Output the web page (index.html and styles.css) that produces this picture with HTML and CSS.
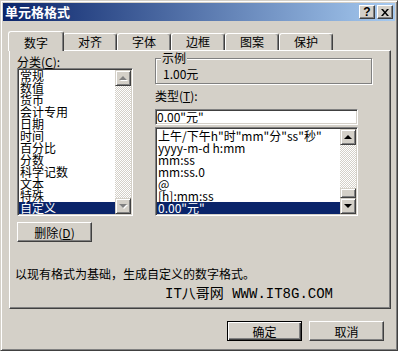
FILE: index.html
```html
<!DOCTYPE html>
<html>
<head>
    <title>单元格格式</title>
    <link rel="stylesheet" href="styles.css">
</head>
<body>
    <div class="window">
        <div class="titlebar">
            <span class="title">单元格格式</span>
            <div class="title-buttons">
                <span class="title-btn help">?</span>
                <span class="title-btn">
                    <svg width="8" height="7" viewBox="0 0 8 7">
                        <path d="M0 0h2l2 2.5L6 0h2L5 3.5 8 7H6L4 4.5 2 7H0l3-3.5z" fill="#000"/>
                    </svg>
                </span>
            </div>
        </div>

        <!-- Tab strip -->
        <div class="tabs">
            <div class="tab active">数字</div>
            <div class="tab">对齐</div>
            <div class="tab">字体</div>
            <div class="tab">边框</div>
            <div class="tab">图案</div>
            <div class="tab">保护</div>
        </div>

        <div class="panel">
            <div class="columns">
                <div class="col-left">
                    <div class="label">分类(<u>C</u>):</div>
                    <div class="listbox category-list">
                        <div class="list-items">
                            <div class="item">常规</div>
                            <div class="item">数值</div>
                            <div class="item">货币</div>
                            <div class="item">会计专用</div>
                            <div class="item">日期</div>
                            <div class="item">时间</div>
                            <div class="item">百分比</div>
                            <div class="item">分数</div>
                            <div class="item">科学记数</div>
                            <div class="item">文本</div>
                            <div class="item">特殊</div>
                            <div class="item selected">自定义</div>
                        </div>
                        <div class="scrollbar disabled">
                            <div class="scroll-btn up"></div>
                            <div class="scroll-track"></div>
                            <div class="scroll-btn down"></div>
                        </div>
                    </div>
                    <button class="btn delete-btn">删除(<u>D</u>)</button>
                </div>

                <div class="col-right">
                    <div class="groupbox">
                        <div class="groupbox-title">示例</div>
                        <div class="sample">1.00元</div>
                    </div>
                    <div class="label type-label">类型(<u>T</u>):</div>
                    <div class="textbox">0.00"元"</div>
                    <div class="listbox type-list">
                        <div class="list-items">
                            <div class="item">上午/下午h"时"mm"分"ss"秒"</div>
                            <div class="item">yyyy-m-d h:mm</div>
                            <div class="item">mm:ss</div>
                            <div class="item">mm:ss.0</div>
                            <div class="item">@</div>
                            <div class="item">[h]:mm:ss</div>
                            <div class="item selected">0.00"元"</div>
                        </div>
                        <div class="scrollbar">
                            <div class="scroll-btn up"></div>
                            <div class="scroll-track"></div>
                            <div class="scroll-thumb"></div>
                            <div class="scroll-btn down"></div>
                        </div>
                    </div>
                </div>
            </div>

            <p class="description">以现有格式为基础，生成自定义的数字格式。</p>
            <p class="watermark">IT八哥网 WWW.IT8G.COM</p>
        </div>

        <div class="dialog-buttons">
            <button class="btn default-btn">确定</button>
            <button class="btn">取消</button>
        </div>
    </div>
</body>
</html>
```

FILE: styles.css
```css
body {
    margin: 0;
    font-family: "Noto Sans CJK SC", "Liberation Sans", sans-serif;
    font-size: 12px;
    color: #000;
    background-color: #d4d0c8;
}

.window {
    width: 398px;
    height: 351px;
    box-sizing: border-box;
    padding: 2px;
    background-color: #d4d0c8;
    border: 1px solid;
    border-color: #d4d0c8 #404040 #404040 #d4d0c8;
    box-shadow: inset 1px 1px 0 #fff, inset -1px -1px 0 #808080;
}

/* Title bar */
.titlebar {
    height: 18px;
    display: flex;
    justify-content: space-between;
    align-items: center;
    padding-left: 2px;
    background: linear-gradient(to right, #0a246a, #a6caf0);
}

.title {
    color: white;
    font-weight: bold;
    font-size: 13px;
    line-height: 18px;
}

.title-buttons {
    display: flex;
    gap: 2px;
    margin-right: 2px;
}

.title-btn {
    width: 16px;
    height: 14px;
    box-sizing: border-box;
    display: flex;
    justify-content: center;
    align-items: center;
    background-color: #d4d0c8;
    border: 1px solid;
    border-color: #fff #404040 #404040 #fff;
    box-shadow: inset -1px -1px 0 #808080;
}

.title-btn.help {
    font-family: "Liberation Sans", sans-serif;
    font-weight: bold;
    font-size: 12px;
    line-height: 12px;
}

/* Tabs */
.tabs {
    display: flex;
    align-items: flex-end;
    height: 19px;
    margin: 10px 0 0 6px;
}

.tab {
    width: 54px;
    height: 17px;
    box-sizing: border-box;
    text-align: center;
    line-height: 16px;
    border: 1px solid #fff;
    border-right-color: #404040;
    border-bottom: none;
    border-radius: 3px 3px 0 0;
    box-shadow: inset -1px 0 0 #808080;
}

.tab.active {
    width: 56px;
    height: 20px;
    margin: 0 -1px -1px -1px;
    line-height: 21px;
    position: relative;
    z-index: 1;
    background-color: #d4d0c8;
}

/* Tab page */
.panel {
    margin-left: 6px;
    width: 382px;
    height: 259px;
    box-sizing: border-box;
    padding: 5px 7px 0;
    border: 1px solid;
    border-color: #fff #404040 #404040 #fff;
    box-shadow: inset -1px -1px 0 #808080;
}

.columns {
    display: flex;
    align-items: flex-start;
    gap: 22px;
}

.col-left {
    width: 116px;
}

.col-right {
    width: 217px;
}

.label {
    line-height: 12px;
    height: 12px;
}

/* List boxes */
.listbox {
    display: flex;
    box-sizing: border-box;
    background-color: white;
    border: 1px solid;
    border-color: #808080 #fff #fff #808080;
    box-shadow: inset 1px 1px 0 #404040, inset -1px -1px 0 #d4d0c8;
}

.list-items {
    flex: 1;
    overflow: hidden;
    margin: 1px 0 1px 1px;
}

.item {
    height: 12px;
    line-height: 12px;
    padding-left: 1px;
    white-space: nowrap;
}

.item.selected {
    background-color: #0a246a;
    color: white;
}

.category-list {
    height: 148px;
}

.type-list {
    width: 203px;
    height: 89px;
    margin-top: 2px;
}

.type-list .list-items {
    padding-top: 1px;
}

.scrollbar {
    width: 16px;
    display: flex;
    flex-direction: column;
    margin: 1px 1px 1px 0;
}

.scroll-btn {
    height: 16px;
    box-sizing: border-box;
    display: flex;
    justify-content: center;
    align-items: center;
    background-color: #d4d0c8;
    border: 1px solid;
    border-color: #d4d0c8 #404040 #404040 #d4d0c8;
    box-shadow: inset 1px 1px 0 #fff, inset -1px -1px 0 #808080;
}

.scroll-btn::before {
    content: "";
    border-left: 4px solid transparent;
    border-right: 4px solid transparent;
}

.scroll-btn.up::before {
    border-bottom: 4px solid #000;
}

.scroll-btn.down::before {
    border-top: 4px solid #000;
}

.scrollbar.disabled .scroll-btn.up::before {
    border-bottom-color: #808080;
    filter: drop-shadow(1px 1px 0 #fff);
}

.scrollbar.disabled .scroll-btn.down::before {
    border-top-color: #808080;
    filter: drop-shadow(1px 1px 0 #fff);
}

.scroll-track {
    flex: 1;
    background: repeating-conic-gradient(#fff 0 25%, #d4d0c8 0 50%);
    background-size: 2px 2px;
}

.scroll-thumb {
    height: 10px;
    box-sizing: border-box;
    background-color: #d4d0c8;
    border: 1px solid;
    border-color: #d4d0c8 #404040 #404040 #d4d0c8;
    box-shadow: inset 1px 1px 0 #fff, inset -1px -1px 0 #808080;
}

/* Sample group */
.groupbox {
    margin-top: 2px;
    box-sizing: border-box;
    padding: 0 7px 3px 5px;
    border: 1px solid #808080;
    box-shadow: inset 1px 1px 0 #fff, 1px 1px 0 #fff;
}

.groupbox-title {
    width: max-content;
    margin-top: -7px;
    padding: 0 1px;
    line-height: 12px;
    background-color: #d4d0c8;
}

.sample {
    margin-top: 4px;
    padding-left: 2px;
    line-height: 12px;
}

.type-label {
    margin-top: 6px;
}

.textbox {
    width: 203px;
    height: 16px;
    box-sizing: border-box;
    margin-top: 7px;
    line-height: 13px;
    background-color: white;
    border: 1px solid;
    border-color: #808080 #fff #fff #808080;
    box-shadow: inset 1px 1px 0 #404040, inset -1px -1px 0 #d4d0c8;
    padding-left: 1px;
}

/* Buttons */
.btn {
    width: 75px;
    height: 20px;
    box-sizing: border-box;
    padding: 0;
    font-family: inherit;
    font-size: 12px;
    color: #000;
    background-color: #d4d0c8;
    border: 1px solid;
    border-color: #fff #404040 #404040 #fff;
    box-shadow: inset -1px -1px 0 #808080;
}

.delete-btn {
    margin-top: 6px;
}

.default-btn {
    border: 1px solid #000;
    box-shadow: inset 1px 1px 0 #fff, inset -1px -1px 0 #404040, inset -2px -2px 0 #808080;
}

.description {
    margin: 26px 0 0 -2px;
    line-height: 12px;
}

.watermark {
    margin: 7px 0 0;
    padding-left: 148px;
    font-family: "Liberation Mono", "Noto Sans CJK SC", monospace;
    font-size: 14px;
    line-height: 14px;
}

.dialog-buttons {
    display: flex;
    justify-content: flex-end;
    gap: 7px;
    margin: 12px 11px 0 0;
}
```
